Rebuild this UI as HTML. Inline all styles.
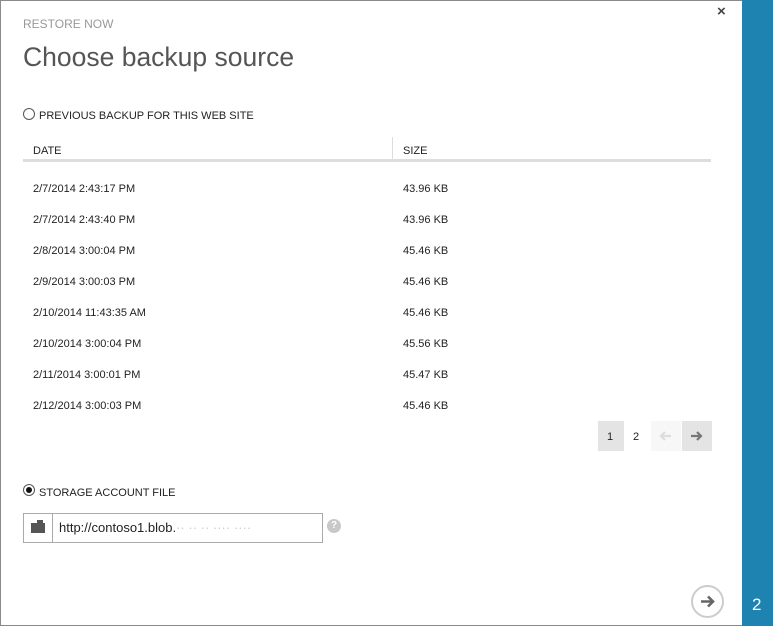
<!DOCTYPE html>
<html><head><style>
*{margin:0;padding:0;box-sizing:border-box}
body{width:773px;height:626px;position:relative;background:#fff;font-family:"Liberation Sans",sans-serif;color:#222;overflow:hidden}
.frame{position:absolute;left:0;top:0;width:773px;height:626px;border:1px solid #8a8a8a;border-right:none}
.bar{position:absolute;left:742px;top:0;width:31px;height:626px;background:#1e83b0;color:#fff;font-size:17px}
.bar span{position:absolute;left:10px;top:595px}
.t{position:absolute;font-size:11px;white-space:nowrap}
.h1{position:absolute;left:23px;top:42px;font-size:26.5px;font-weight:300;color:#555}
.radio{position:absolute;width:12px;height:12px;border:1px solid #555;border-radius:50%}
</style></head><body>
<div class="frame"></div>
<div class="t" style="left:23px;top:17px;color:#999;font-size:12px">RESTORE NOW</div>
<div class="t" style="left:717px;top:3px;font-size:15px;font-weight:bold;color:#444">×</div>
<div class="h1">Choose backup source</div>
<div class="radio" style="left:23px;top:108px"></div>
<div class="t" style="left:39px;top:110px">PREVIOUS BACKUP FOR THIS WEB SITE</div>
<div class="t" style="left:33px;top:145px">DATE</div>
<div style="position:absolute;left:392px;top:137px;width:1px;height:22px;background:#ddd"></div>
<div class="t" style="left:403px;top:145px">SIZE</div>
<div style="position:absolute;left:23px;top:159px;width:688px;height:3px;background:#ddd"></div>
<div class="t" style="left:33px;top:183px">2/7/2014 2:43:17 PM</div><div class="t" style="left:403px;top:183px">43.96 KB</div>
<div class="t" style="left:33px;top:214px">2/7/2014 2:43:40 PM</div><div class="t" style="left:403px;top:214px">43.96 KB</div>
<div class="t" style="left:33px;top:245px">2/8/2014 3:00:04 PM</div><div class="t" style="left:403px;top:245px">45.46 KB</div>
<div class="t" style="left:33px;top:276px">2/9/2014 3:00:03 PM</div><div class="t" style="left:403px;top:276px">45.46 KB</div>
<div class="t" style="left:33px;top:307px">2/10/2014 11:43:35 AM</div><div class="t" style="left:403px;top:307px">45.46 KB</div>
<div class="t" style="left:33px;top:338px">2/10/2014 3:00:04 PM</div><div class="t" style="left:403px;top:338px">45.56 KB</div>
<div class="t" style="left:33px;top:369px">2/11/2014 3:00:01 PM</div><div class="t" style="left:403px;top:369px">45.47 KB</div>
<div class="t" style="left:33px;top:400px">2/12/2014 3:00:03 PM</div><div class="t" style="left:403px;top:400px">45.46 KB</div>
<div style="position:absolute;left:598px;top:421px;width:26px;height:30px;background:#e4e4e4"></div>
<div class="t" style="left:607px;top:431px">1</div>
<div class="t" style="left:633px;top:431px">2</div>
<div style="position:absolute;left:651px;top:421px;width:30px;height:30px;background:#f7f7f7"><svg width="30" height="30"><path d="M20 15H10M14 11l-4 4 4 4" stroke="#ddd" stroke-width="2.2" fill="none"/></svg></div>
<div style="position:absolute;left:682px;top:421px;width:30px;height:30px;background:#e4e4e4"><svg width="30" height="30"><path d="M9 15h10M15 11l4 4-4 4" stroke="#777" stroke-width="2.2" fill="none"/></svg></div>
<div class="radio" style="left:23px;top:484px"></div>
<div style="position:absolute;left:26px;top:487px;width:6px;height:6px;border-radius:50%;background:#111"></div>
<div class="t" style="left:39px;top:487px">STORAGE ACCOUNT FILE</div>
<div style="position:absolute;left:23px;top:513px;width:300px;height:30px;border:1px solid #aaa"></div>
<div style="position:absolute;left:52px;top:514px;width:1px;height:28px;background:#aaa"></div>
<div style="position:absolute;left:31px;top:523px;width:14px;height:10px;background:#555"></div>
<div style="position:absolute;left:37px;top:520px;width:6px;height:3px;background:#555"></div>
<div class="t" style="left:59px;top:520px;font-size:13px">http://contoso1.blob.<span style="color:#ccc">·· ·· ·· ···· ····</span></div>
<div style="position:absolute;left:327px;top:519px;width:14px;height:14px;border-radius:50%;background:#c8c8c8;color:#fff;font-size:10px;font-weight:bold;text-align:center;line-height:14px">?</div>
<div style="position:absolute;left:691px;top:585px;width:33px;height:33px;border:2px solid #ccc;border-radius:50%"><svg width="29" height="29"><path d="M8 14.5h12M15 9.5l5 5-5 5" stroke="#666" stroke-width="2.6" fill="none"/></svg></div>
<div class="bar"><span>2</span></div>
</body></html>
